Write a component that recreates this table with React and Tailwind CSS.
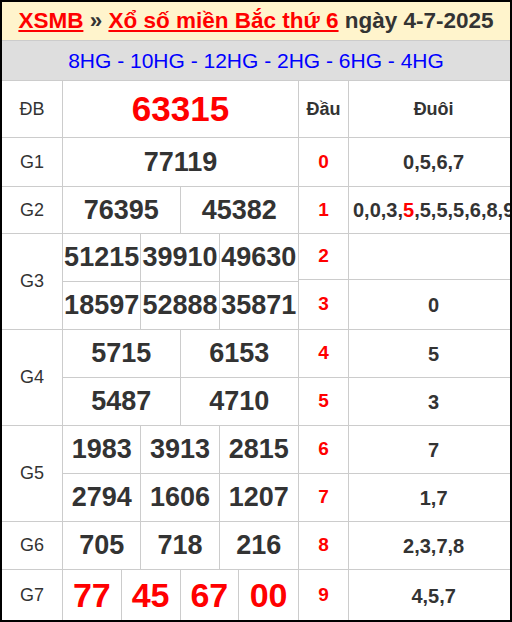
import React from "react";

const font = { fontFamily: '"Liberation Sans", Arial, sans-serif' };

function Cells({ nums, cols, className }) {
  const gridCls =
    cols === 1 ? "grid-cols-1" : cols === 2 ? "grid-cols-2" : cols === 3 ? "grid-cols-3" : "grid-cols-4";
  return (
    <div className={`grid ${gridCls} h-full`}>
      {nums.map((n, i) => (
        <div
          key={i}
          className={`flex items-center justify-center whitespace-nowrap ${i < nums.length - 1 ? "border-r border-[#cccccc]" : ""} ${className}`}
        >
          {n}
        </div>
      ))}
    </div>
  );
}

const numCls = "text-[27px] font-bold text-[#333333] tracking-[0px]";

function PrizeRow({ label, h, rows, cols, last, cls = numCls }) {
  return (
    <div className={`flex ${h} ${last ? "" : "border-b border-[#cccccc]"}`}>
      <div className="w-[61px] shrink-0 border-r border-[#cccccc] flex items-center justify-center text-[18px] text-[#333333]">
        {label}
      </div>
      <div className="flex-1 flex flex-col">
        {rows.map((r, i) => (
          <div key={i} className={`${i < rows.length - 1 ? "h-[48px] shrink-0 border-b border-[#cccccc]" : "flex-1"}`}>
            <Cells nums={r} cols={cols} className={cls} />
          </div>
        ))}
      </div>
    </div>
  );
}

function LotoRow({ h, head, tail, last, header }) {
  return (
    <div className={`flex ${h} ${last ? "" : "border-b border-[#cccccc]"}`}>
      <div
        className={`w-[50px] shrink-0 border-r border-[#cccccc] flex items-center justify-center font-bold ${header ? "text-[18px] text-[#333333]" : "text-[19px] text-[#ff0000]"}`}
      >
        {head}
      </div>
      <div className="flex-1 flex items-center overflow-hidden">
        <div
          className={`w-full px-1 text-center whitespace-nowrap font-bold text-[#333333] ${header ? "text-[18px]" : "text-[20px]"}`}
        >
          {tail}
        </div>
      </div>
    </div>
  );
}

export default function App() {
  return (
    <div style={font} className="w-[512px] h-[622px] border-2 border-black bg-white flex flex-col overflow-hidden">
      <div className="h-[39px] shrink-0 bg-[#fff4cc] border-b border-[#cccccc] flex items-center justify-center whitespace-nowrap text-[22.5px] font-bold text-[#333333]">
        <span>
          <a className="text-[#ff0000] underline">XSMB</a>
          <span> » </span>
          <a className="text-[#ff0000] underline">Xổ số miền Bắc thứ 6</a>
          <span> ngày 4-7-2025</span>
        </span>
      </div>
      <div className="h-[40px] shrink-0 bg-[#dedede] border-b border-[#cccccc] flex items-center justify-center whitespace-nowrap text-[21px] text-[#0000ff]">
        8HG - 10HG - 12HG - 2HG - 6HG - 4HG
      </div>
      <div className="flex flex-1">
        <div className="w-[297px] shrink-0 border-r border-[#cccccc] flex flex-col">
          <PrizeRow label="ĐB" h="h-[57px]" rows={[["63315"]]} cols={1} cls="text-[35px] font-bold text-[#ff0000]" />
          <PrizeRow label="G1" h="h-[49px]" rows={[["77119"]]} cols={1} />
          <PrizeRow label="G2" h="h-[47px]" rows={[["76395", "45382"]]} cols={2} />
          <PrizeRow
            label="G3"
            h="h-[96px]"
            rows={[
              ["51215", "39910", "49630"],
              ["18597", "52888", "35871"],
            ]}
            cols={3}
          />
          <PrizeRow
            label="G4"
            h="h-[96px]"
            rows={[
              ["5715", "6153"],
              ["5487", "4710"],
            ]}
            cols={2}
          />
          <PrizeRow
            label="G5"
            h="h-[96px]"
            rows={[
              ["1983", "3913", "2815"],
              ["2794", "1606", "1207"],
            ]}
            cols={3}
          />
          <PrizeRow label="G6" h="h-[48px]" rows={[["705", "718", "216"]]} cols={3} />
          <PrizeRow
            label="G7"
            h="flex-1"
            rows={[["77", "45", "67", "00"]]}
            cols={4}
            last
            cls="text-[34px] font-bold text-[#ff0000]"
          />
        </div>
        <div className="flex-1 flex flex-col">
          <LotoRow h="h-[57px]" head="Đầu" tail="Đuôi" header />
          <LotoRow h="h-[49px]" head="0" tail="0,5,6,7" />
          <LotoRow
            h="h-[47px]"
            head="1"
            tail={
              <>
                0,0,3,<span className="text-[#ff0000]">5</span>,5,5,5,6,8,9
              </>
            }
          />
          <LotoRow h="h-[46px]" head="2" tail="" />
          <LotoRow h="h-[50px]" head="3" tail="0" />
          <LotoRow h="h-[48px]" head="4" tail="5" />
          <LotoRow h="h-[48px]" head="5" tail="3" />
          <LotoRow h="h-[48px]" head="6" tail="7" />
          <LotoRow h="h-[48px]" head="7" tail="1,7" />
          <LotoRow h="h-[48px]" head="8" tail="2,3,7,8" />
          <LotoRow h="flex-1" head="9" tail="4,5,7" last />
        </div>
      </div>
    </div>
  );
}
